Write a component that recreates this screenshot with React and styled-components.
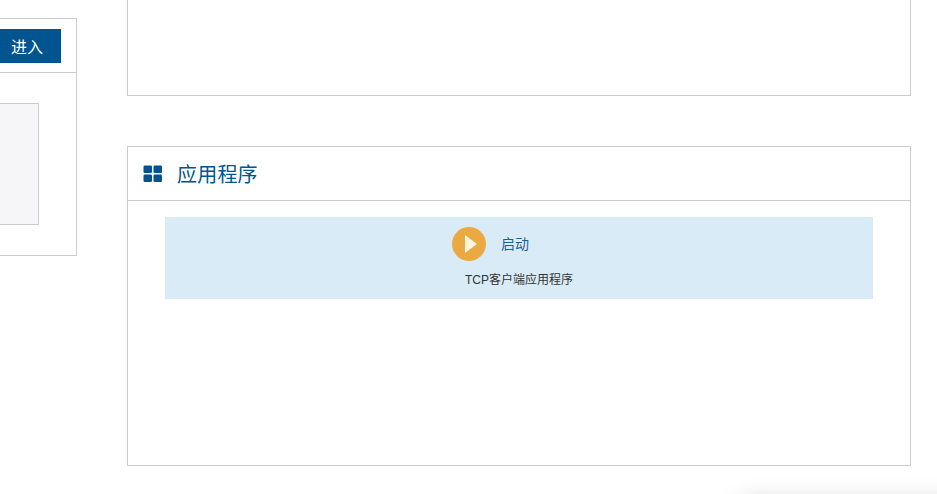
import React from "react";
import styled, { createGlobalStyle } from "styled-components";

const Global = createGlobalStyle`
  html, body { margin: 0; padding: 0; background: #fff; overflow: hidden; }
  body { font-family: "Liberation Sans", "Noto Sans CJK SC", sans-serif; }
`;

const Page = styled.div`
  position: relative;
  display: flex;
  align-items: flex-start;
  width: 937px;
  height: 494px;
  overflow: hidden;
`;

const LeftColumn = styled.div`
  flex: 0 0 77px;
  width: 77px;
  padding-top: 18px;
  display: flex;
  justify-content: flex-end;
`;

const Panel = styled.section`
  box-sizing: border-box;
  background: #fff;
  border: 1px solid #ccc;
`;

const SidePanel = styled(Panel)`
  flex: 0 0 120px;
  height: 238px;
`;

const SideHeader = styled.div`
  box-sizing: border-box;
  height: 54px;
  border-bottom: 1px solid #ccc;
  display: flex;
  justify-content: flex-end;
  align-items: flex-start;
  padding: 10px 15px 0 0;
`;

const EnterButton = styled.button`
  width: 90px;
  height: 34px;
  padding: 0 18px 0 0;
  border: 0;
  background: #00548f;
  color: #fff;
  font: 16px "Liberation Sans", "Noto Sans CJK SC", sans-serif;
  text-align: right;
`;

const SideBody = styled.div`
  display: flex;
  justify-content: flex-end;
  padding: 30px 37px 0 0;
`;

const Preview = styled.div`
  box-sizing: border-box;
  width: 80px;
  height: 122px;
  background: #f6f6f9;
  border: 1px solid #ccc;
`;

const MainColumn = styled.div`
  flex: 0 0 784px;
  width: 784px;
  margin-left: 50px;
  display: flex;
  flex-direction: column;
  gap: 50px;
`;

const TopPanel = styled(Panel)`
  height: 96px;
  border-top: 0;
`;

const AppPanel = styled(Panel)`
  height: 320px;
`;

const AppHeader = styled.header`
  box-sizing: border-box;
  height: 54px;
  border-bottom: 1px solid #ccc;
  display: flex;
  align-items: center;
  gap: 14px;
  padding-left: 15px;
`;

const Title = styled.h2`
  margin: 0;
  font-size: 20px;
  font-weight: 400;
  letter-spacing: 0.2px;
  color: #00548f;
`;

const AppBody = styled.div`
  padding: 16px 37px 0;
`;

const AppTile = styled.div`
  height: 82px;
  background: #d9ebf7;
  display: flex;
  flex-direction: column;
  align-items: center;
`;

const RunRow = styled.div`
  display: flex;
  align-items: center;
  gap: 15px;
  margin: 10px 57px 0 0;
  height: 34px;
`;

const PlayBtn = styled.span`
  flex: 0 0 34px;
  display: block;
  width: 34px;
  height: 34px;
`;

const RunLabel = styled.span`
  font-size: 14px;
  color: #1c5f96;
  white-space: nowrap;
  padding-bottom: 2px;
`;

const AppName = styled.div`
  margin-top: 12px;
  font-size: 12px;
  line-height: 14px;
  color: #333;
`;

const CornerShadow = styled.div`
  position: absolute;
  left: 742px;
  top: 505px;
  width: 300px;
  height: 60px;
  box-shadow: 0 0 26px rgba(0, 0, 0, 0.28);
  background: #fff;
`;

const GridIcon = () => (
  <svg width="20" height="18" viewBox="0 0 20 18" aria-hidden="true">
    <g fill="#00548f">
      <rect x="0.5" y="0.5" width="8.5" height="7.5" rx="1.2" />
      <rect x="10.5" y="0.5" width="8.5" height="7.5" rx="1.2" />
      <rect x="0.5" y="9.5" width="8.5" height="7.5" rx="1.2" />
      <rect x="10.5" y="9.5" width="8.5" height="7.5" rx="1.2" />
    </g>
  </svg>
);

const PlayIcon = () => (
  <PlayBtn>
    <svg width="34" height="34" viewBox="0 0 34 34" aria-hidden="true">
      <circle cx="17" cy="17" r="17" fill="#eaa941" />
      <path d="M13 8 L25 17 L13 26 Z" fill="#fdf6dc" />
    </svg>
  </PlayBtn>
);

export default function App() {
  return (
    <>
      <Global />
      <Page>
        <LeftColumn>
          <SidePanel>
            <SideHeader>
              <EnterButton>进入</EnterButton>
            </SideHeader>
            <SideBody>
              <Preview />
            </SideBody>
          </SidePanel>
        </LeftColumn>
        <MainColumn>
          <TopPanel />
          <AppPanel>
            <AppHeader>
              <GridIcon />
              <Title>应用程序</Title>
            </AppHeader>
            <AppBody>
              <AppTile>
                <RunRow>
                  <PlayIcon />
                  <RunLabel>启动</RunLabel>
                </RunRow>
                <AppName>TCP客户端应用程序</AppName>
              </AppTile>
            </AppBody>
          </AppPanel>
        </MainColumn>
        <CornerShadow />
      </Page>
    </>
  );
}
